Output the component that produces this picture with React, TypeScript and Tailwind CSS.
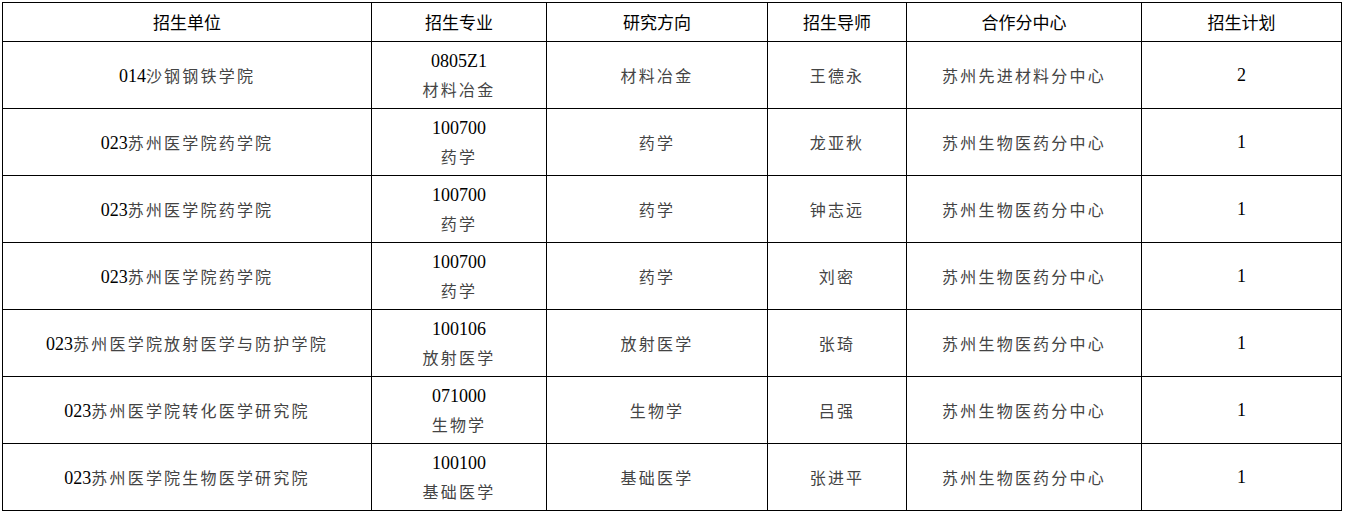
type Row = {
  unit: string;
  major: [string, string];
  direction: string;
  tutor: string;
  center: string;
  plan: string;
};

const rows: Row[] = [
  { unit: "014沙钢钢铁学院", major: ["0805Z1", "材料冶金"], direction: "材料冶金", tutor: "王德永", center: "苏州先进材料分中心", plan: "2" },
  { unit: "023苏州医学院药学院", major: ["100700", "药学"], direction: "药学", tutor: "龙亚秋", center: "苏州生物医药分中心", plan: "1" },
  { unit: "023苏州医学院药学院", major: ["100700", "药学"], direction: "药学", tutor: "钟志远", center: "苏州生物医药分中心", plan: "1" },
  { unit: "023苏州医学院药学院", major: ["100700", "药学"], direction: "药学", tutor: "刘密", center: "苏州生物医药分中心", plan: "1" },
  { unit: "023苏州医学院放射医学与防护学院", major: ["100106", "放射医学"], direction: "放射医学", tutor: "张琦", center: "苏州生物医药分中心", plan: "1" },
  { unit: "023苏州医学院转化医学研究院", major: ["071000", "生物学"], direction: "生物学", tutor: "吕强", center: "苏州生物医药分中心", plan: "1" },
  { unit: "023苏州医学院生物医学研究院", major: ["100100", "基础医学"], direction: "基础医学", tutor: "张进平", center: "苏州生物医药分中心", plan: "1" },
];

const headers = ["招生单位", "招生专业", "研究方向", "招生导师", "合作分中心", "招生计划"];

// digits/latin in Times-like serif, Chinese in a CJK face with wide spacing
function Mixed({ text }: { text: string }) {
  const parts = text.split(/([A-Za-z0-9]+)/).filter(Boolean);
  return (
    <>
      {parts.map((p, i) =>
        /^[A-Za-z0-9]+$/.test(p) ? (
          <span key={i} className="font-['Liberation_Serif',serif] text-[18px] text-black">
            {p}
          </span>
        ) : (
          <span
            key={i}
            className="font-['Noto_Sans_CJK_SC',sans-serif] text-[16px] tracking-[2.2px] text-[#444]"
          >
            {p}
          </span>
        )
      )}
    </>
  );
}

function Cell({ lines }: { lines: string[] }) {
  return (
    <td className="border border-black p-0 text-center align-middle">
      {lines.map((l, i) => (
        <div key={i} className="leading-[28px]">
          <Mixed text={l} />
        </div>
      ))}
    </td>
  );
}

export default function App() {
  return (
    <div className="h-[513px] w-[1345px] bg-white pl-[2px] pt-[2px]">
      <table className="w-[1340px] table-fixed border-collapse">
        <colgroup>
          <col className="w-[369px]" />
          <col className="w-[175px]" />
          <col className="w-[221px]" />
          <col className="w-[139px]" />
          <col className="w-[235px]" />
          <col className="w-[200px]" />
        </colgroup>
        <thead>
          <tr className="h-[39px]">
            {headers.map((h) => (
              <th
                key={h}
                className="border border-black p-0 text-center align-middle font-['Noto_Sans_CJK_SC',sans-serif] text-[17px] font-normal leading-[24px] text-black"
              >
                {h}
              </th>
            ))}
          </tr>
        </thead>
        <tbody>
          {rows.map((r, i) => (
            <tr key={i} className="h-[67px]">
              <Cell lines={[r.unit]} />
              <Cell lines={r.major} />
              <Cell lines={[r.direction]} />
              <Cell lines={[r.tutor]} />
              <Cell lines={[r.center]} />
              <Cell lines={[r.plan]} />
            </tr>
          ))}
        </tbody>
      </table>
    </div>
  );
}
